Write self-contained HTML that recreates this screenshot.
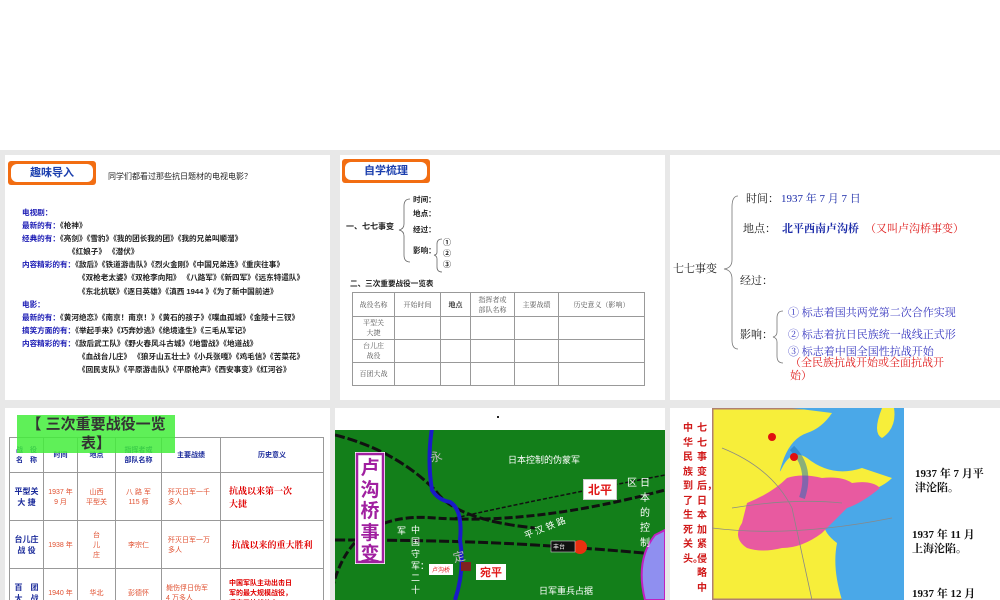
<!DOCTYPE html>
<html><head><meta charset="utf-8">
<style>
*{margin:0;padding:0;box-sizing:border-box}
html,body{width:1000px;height:600px;overflow:hidden}
body{background:#fff;position:relative;font-family:"Liberation Sans","Noto Sans CJK SC",sans-serif}
.a{position:absolute;white-space:nowrap}
.p{position:absolute;background:#fff;overflow:hidden}
.badge{position:absolute;background:#f26d12;border-radius:3px;padding:3px}
.badge div{background:#fff;border-radius:6px;height:100%;color:#1b3fae;font-weight:bold;text-align:center;font-size:11px}
.s7{font-size:7.6px;font-weight:bold;color:#222}
.bl{color:#1a1ab4}
table{border-collapse:collapse;position:absolute}
td{border:1px solid #999;text-align:center;vertical-align:middle}
</style></head><body>
<div class="a" style="left:0;top:150px;width:1000px;height:450px;background:#e8e8e8"></div>

<!-- top left -->
<div class="p" style="left:5px;top:155px;width:325px;height:245px">
<div class="badge" style="left:3px;top:6px;width:88px;height:24px"><div style="line-height:18px">趣味导入</div></div>
<div class="a" style="left:103px;top:16px;font-size:8px;color:#222">同学们都看过那些抗日题材的电视电影？</div>
<div class="a s7" style="left:17px;top:51px;line-height:13.1px">
<span class="bl">电视剧：</span><br>
<span class="bl">最新的有：</span>《枪神》<br>
<span class="bl">经典的有：</span>《亮剑》《雪豹》《我的团长我的团》《我的兄弟叫顺溜》<br>
<span style="padding-left:46px">《红娘子》 《潜伏》</span><br>
<span class="bl">内容精彩的有：</span>《敌后》《铁道游击队》《烈火金刚》《中国兄弟连》《重庆往事》<br>
<span style="padding-left:56px">《双枪老太婆》《双枪李向阳》 《八路军》《新四军》《远东特遣队》</span><br>
<span style="padding-left:56px">《东北抗联》《逐日英雄》《滇西 1944 》《为了新中国前进》</span><br>
<span class="bl">电影：</span><br>
<span class="bl">最新的有：</span>《黄河绝恋》《南京！南京！》《黄石的孩子》《喋血孤城》《金陵十三钗》<br>
<span class="bl">搞笑方面的有：</span>《举起手来》《巧奔妙逃》《绝境逢生》《三毛从军记》<br>
<span class="bl">内容精彩的有：</span>《敌后武工队》《野火春风斗古城》《地雷战》《地道战》<br>
<span style="padding-left:56px">《血战台儿庄》 《狼牙山五壮士》《小兵张嘎》《鸡毛信》《苦菜花》</span><br>
<span style="padding-left:56px">《回民支队》《平原游击队》《平原枪声》《西安事变》《红河谷》</span>
</div>
</div>

<!-- top middle -->
<div class="p" style="left:340px;top:155px;width:325px;height:245px">
<div class="badge" style="left:2px;top:4px;width:88px;height:24px"><div style="line-height:18px">自学梳理</div></div>
<div class="a s7" style="left:6px;top:66px;font-size:8px">一、七七事变</div>
<svg class="a" style="left:58px;top:43px" width="14" height="65"><path d="M12 1 Q6 1 6 8 L6 26 Q6 31 1 32 Q6 33 6 38 L6 57 Q6 64 12 64" fill="none" stroke="#666" stroke-width="0.8"/></svg>
<div class="a s7" style="left:73px;top:38px;line-height:14px">时间：<br>地点：</div>
<div class="a s7" style="left:73px;top:69px">经过：</div>
<div class="a s7" style="left:73px;top:90px">影响：</div>
<svg class="a" style="left:93px;top:83px" width="10" height="35"><path d="M9 1 Q4 1 4 6 L4 14 Q4 17 1 17 Q4 18 4 21 L4 29 Q4 34 9 34" fill="none" stroke="#666" stroke-width="0.8"/></svg>
<div class="a s7" style="left:103px;top:82px;line-height:11px;font-size:8px">①<br>②<br>③</div>
<div class="a s7" style="left:10px;top:123px">二、三次重要战役一览表</div>
<table style="left:12px;top:137px;width:293px;font-size:7px;color:#555;font-family:'Liberation Serif','Noto Serif CJK SC',serif">
<tr style="height:24px"><td style="width:42px">战役名称</td><td style="width:46px">开始时间</td><td style="width:30px;font-weight:bold;color:#222">地点</td><td style="width:44px">指挥者或<br>部队名称</td><td style="width:44px">主要战绩</td><td>历史意义（影响）</td></tr>
<tr style="height:23px"><td>平型关<br>大捷</td><td></td><td></td><td></td><td></td><td></td></tr>
<tr style="height:23px"><td>台儿庄<br>战役</td><td></td><td></td><td></td><td></td><td></td></tr>
<tr style="height:23px"><td>百团大战</td><td></td><td></td><td></td><td></td><td></td></tr>
</table>
</div>

<!-- top right -->
<div class="p" style="left:670px;top:155px;width:330px;height:245px;font-family:'Liberation Serif','Noto Serif CJK SC',serif">
<div class="a" style="left:3px;top:105px;font-size:11px;color:#222">七七事变</div>
<svg class="a" style="left:53px;top:40px" width="16" height="155"><path d="M15 1 Q9 1 9 12 L9 65 Q9 73 1 74 Q9 75 9 84 L9 145 Q9 154 15 154" fill="none" stroke="#777" stroke-width="0.8"/></svg>
<div class="a" style="left:76px;top:35px;font-size:11px;color:#222">时间：<span style="color:#1a2aa8;margin-left:2px">1937 年 7 月 7 日</span></div>
<div class="a" style="left:73px;top:65px;font-size:11px;color:#222">地点：<span style="color:#1a2aa8;margin-left:6px;font-weight:bold">北平西南卢沟桥</span><span style="color:#e02020;margin-left:6px">（又叫卢沟桥事变）</span></div>
<div class="a" style="left:70px;top:117px;font-size:11px;color:#222">经过：</div>
<div class="a" style="left:70px;top:171px;font-size:11px;color:#222">影响：</div>
<svg class="a" style="left:102px;top:155px" width="12" height="55"><path d="M11 1 Q5 1 5 8 L5 22 Q5 26 1 27 Q5 28 5 32 L5 46 Q5 53 11 53" fill="none" stroke="#777" stroke-width="0.8"/></svg>
<div class="a" style="left:118px;top:147px;font-size:11px;color:#3838c0;line-height:22px">① 标志着国共两党第二次合作实现<br>② 标志着抗日民族统一战线正式形</div>
<div class="a" style="left:118px;top:188px;font-size:11px;color:#3838c0">③ 标志着中国全国性抗战开始</div>
<div class="a" style="left:120px;top:202px;font-size:11px;color:#e02020;line-height:13px">（全民族抗战开始或全面抗战开<br>始）</div>
</div>

<!-- bottom left -->
<div class="p" style="left:5px;top:408px;width:325px;height:192px">
<table style="left:4px;top:29px;width:315px;font-size:7px;font-weight:bold;color:#e05030">
<tr style="height:35px;color:#1a2a9a"><td style="width:34px">战　役<br>名　称</td><td style="width:34px">时间</td><td style="width:38px">地点</td><td style="width:46px">指挥者或<br>部队名称</td><td style="width:59px">主要战绩</td><td>历史意义</td></tr>
<tr style="height:48px"><td style="color:#1a2a9a;font-size:8px">平型关<br>大 捷</td><td style="font-weight:normal">1937 年<br>9 月</td><td style="font-weight:normal">山西<br>平型关</td><td style="font-weight:normal">八 路 军<br>115 师</td><td style="font-weight:normal;text-align:left;padding-left:6px">歼灭日军一千<br>多人</td><td style="color:#e00000;font-size:9px;text-align:left;padding-left:8px;font-family:'Liberation Serif','Noto Serif CJK SC',serif">抗战以来第一次<br>大捷</td></tr>
<tr style="height:48px"><td style="color:#1a2a9a;font-size:8px">台儿庄<br>战 役</td><td style="font-weight:normal">1938 年</td><td style="font-weight:normal">台<br>儿<br>庄</td><td style="font-weight:normal">李宗仁</td><td style="font-weight:normal;text-align:left;padding-left:6px">歼灭日军一万<br>多人</td><td style="color:#e00000;font-size:9px;font-family:'Liberation Serif','Noto Serif CJK SC',serif">抗战以来的重大胜利</td></tr>
<tr style="height:48px"><td style="color:#1a2a9a;font-size:8px">百　团<br>大　战</td><td style="font-weight:normal">1940 年</td><td style="font-weight:normal">华北</td><td style="font-weight:normal">彭德怀</td><td style="font-weight:normal;text-align:left;padding-left:4px">毙伤俘日伪军<br>4 万多人</td><td style="color:#e00000;font-size:7px;text-align:left;padding-left:8px">中国军队主动出击日<br>军的最大规模战役，<br>坚定了抗战信心</td></tr>
</table>
<div class="a" style="left:12px;top:7px;width:158px;height:38px;background:#44ee3c;opacity:0.85;font-size:15px;font-weight:bold;color:#111;text-align:center;line-height:19px;white-space:normal">【 三次重要战役一览<br>表】</div>
</div>

<!-- bottom middle -->
<div class="p" style="left:335px;top:408px;width:330px;height:192px">
<div class="a" style="left:162px;top:8px;width:2px;height:2px;background:#222"></div>
<svg class="a" style="left:0;top:22px" width="330" height="170">
<rect width="330" height="170" fill="#137f1a"/>
<path d="M-5 170 Q10 80 100 88 Q200 95 330 60" fill="none" stroke="#111" stroke-width="3" stroke-dasharray="8 3"/>
<path d="M120 88 Q200 70 330 45" fill="none" stroke="#111" stroke-width="1.5" stroke-dasharray="4 2"/>
<path d="M0 110 Q120 110 200 115 Q280 120 330 125" fill="none" stroke="#111" stroke-width="3" stroke-dasharray="10 3"/>
<path d="M0 5 Q60 20 100 60 Q120 90 200 98" fill="none" stroke="#111" stroke-width="3" stroke-dasharray="10 3"/>
<path d="M-3 -2 Q-8 30 -3 60 Q3 70 15 72 Q28 80 25 110 Q30 140 20 170" fill="none" stroke="#1a1ac8" stroke-width="4" transform="translate(100,0)"/>
<path d="M310 170 Q300 130 320 105 L330 100 L330 170Z" fill="#8f8ff0" stroke="#c020c0" stroke-width="2"/>
<circle cx="245" cy="117" r="7" fill="#e83010"/>
<rect x="216" y="111" width="24" height="11" fill="#111" stroke="#ccc" stroke-width="0.6"/>
<rect x="20" y="22" width="30" height="112" fill="#fff"/>
<rect x="22" y="24" width="26" height="108" fill="none" stroke="#a020a0" stroke-width="2.5"/>
<rect x="126" y="132" width="10" height="9" fill="#802020"/>
</svg>
<div class="a" style="left:20px;top:50px;font-size:19px;font-weight:bold;color:#a020a0;line-height:21.5px;white-space:normal;width:30px;text-align:center">卢沟桥事变</div>
<div class="a" style="left:173px;top:45px;font-size:9px;color:#fff">日本控制的伪蒙军</div>
<div class="a" style="left:248px;top:71px;background:#fff;border:1px solid #ccc;padding:1px 4px;font-size:12px;font-weight:bold;color:#e01818">北平</div>
<div class="a" style="left:292px;top:66px;font-size:10px;color:#fff">区</div>
<div class="a" style="left:305px;top:68px;font-size:10px;color:#fff;line-height:15px;white-space:normal;width:12px">日本的控制</div>
<div class="a" style="left:188px;top:113px;font-size:9px;color:#fff;transform:rotate(-22deg)">平 汉 铁 路</div>
<div class="a" style="left:218px;top:134px;font-size:6px;color:#fff">丰台</div>
<div class="a" style="left:95px;top:40px;font-size:12px;color:#bbb;transform:rotate(-15deg)">永</div>
<div class="a" style="left:118px;top:140px;font-size:12px;color:#bbb;transform:rotate(-15deg)">定</div>
<div class="a" style="left:62px;top:116px;font-size:9px;color:#fff">军</div>
<div class="a" style="left:76px;top:116px;font-size:9px;color:#fff;line-height:12px;white-space:normal;width:10px">中国守军：二十</div>
<div class="a" style="left:94px;top:156px;background:#fff;font-size:6px;color:#e01818;padding:1px 3px">卢沟桥</div>
<div class="a" style="left:141px;top:156px;background:#fff;font-size:11px;font-weight:bold;color:#e01818;padding:0 4px">宛平</div>
<div class="a" style="left:204px;top:176px;font-size:9px;color:#fff">日军重兵占据</div>
</div>

<!-- bottom right -->
<div class="p" style="left:670px;top:408px;width:330px;height:192px">
<div class="a" style="left:13px;top:14px;font-size:10px;font-weight:bold;color:#d01818;line-height:14.5px;white-space:normal;width:12px">中华民族到了生死关头。</div>
<div class="a" style="left:27px;top:14px;font-size:10px;font-weight:bold;color:#d01818;line-height:14.5px;white-space:normal;width:12px">七七事变后，日本加紧侵略中</div>
<svg class="a" style="left:42px;top:0" width="192" height="192">
<rect width="192" height="192" fill="#f7ee3a"/>
<rect x="0" y="0" width="192" height="192" fill="none" stroke="#b08070" stroke-width="3"/>
<path d="M80 0 L192 0 L192 192 L130 192 Q120 160 125 135 Q105 120 115 105 Q125 95 150 85 Q170 80 180 70 L150 60 Q120 70 95 50 Q80 40 70 60 Q65 70 72 50 Q80 30 95 25 Q110 20 120 5Z" fill="#4aa8e8"/>
<path d="M170 0 L182 0 Q185 20 170 30 Q160 25 170 0Z" fill="#f7ee3a"/>
<path d="M35 95 Q60 85 75 70 Q90 65 110 70 Q130 68 140 75 Q160 72 168 80 Q150 95 135 100 Q120 115 110 125 Q90 140 70 140 Q50 145 35 140 Q20 130 30 115Z" fill="#e85aa0"/>
<path d="M80 40 Q100 60 90 90" fill="none" stroke="#1c6fb8" stroke-width="6" opacity="0.5"/>
<circle cx="60" cy="29" r="4" fill="#e01010"/>
<circle cx="82" cy="49" r="4" fill="#e01010"/>
<path d="M10 40 Q60 60 80 100 L100 192 M0 120 Q80 130 180 110 M20 100 Q80 90 130 95" fill="none" stroke="#888" stroke-width="0.8"/>
</svg>
<div class="a" style="left:245px;top:59px;font-size:11px;font-weight:bold;color:#111;line-height:14px;font-family:'Liberation Serif','Noto Serif CJK SC',serif">1937 年 7 月平<br>津沦陷。</div>
<div class="a" style="left:242px;top:120px;font-size:11px;font-weight:bold;color:#111;line-height:14px;font-family:'Liberation Serif','Noto Serif CJK SC',serif">1937 年 11 月<br>上海沦陷。</div>
<div class="a" style="left:242px;top:177px;font-size:11px;font-weight:bold;color:#111;font-family:'Liberation Serif','Noto Serif CJK SC',serif">1937 年 12 月</div>
</div>
</body></html>
